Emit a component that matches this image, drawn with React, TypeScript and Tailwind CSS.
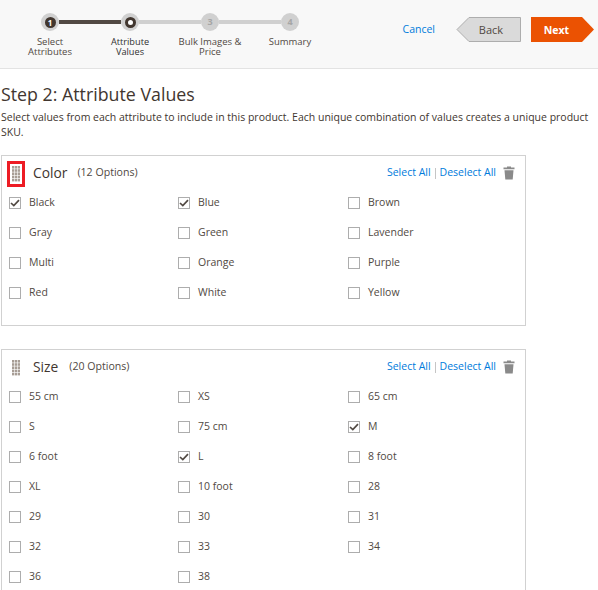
import * as React from 'react'

type Option = { label: string; checked?: boolean }

const colorOptions: Option[] = [
  { label: 'Black', checked: true },
  { label: 'Blue', checked: true },
  { label: 'Brown' },
  { label: 'Gray' },
  { label: 'Green' },
  { label: 'Lavender' },
  { label: 'Multi' },
  { label: 'Orange' },
  { label: 'Purple' },
  { label: 'Red' },
  { label: 'White' },
  { label: 'Yellow' },
]

const sizeOptions: Option[] = [
  { label: '55 cm' },
  { label: 'XS' },
  { label: '65 cm' },
  { label: 'S' },
  { label: '75 cm' },
  { label: 'M', checked: true },
  { label: '6 foot' },
  { label: 'L', checked: true },
  { label: '8 foot' },
  { label: 'XL' },
  { label: '10 foot' },
  { label: '28' },
  { label: '29' },
  { label: '30' },
  { label: '31' },
  { label: '32' },
  { label: '33' },
  { label: '34' },
  { label: '36' },
  { label: '38' },
]

const Grip = () => (
  <svg width="8" height="16" viewBox="0 0 8 16" className="block">
    {[0, 3, 6].map((x) =>
      [0, 3.2, 6.4, 9.6, 12.8].map((y) => (
        <rect key={`${x}-${y}`} x={x} y={y} width="2.4" height="2.6" fill="#a79d95" />
      )),
    )}
  </svg>
)

const TrashIcon = () => (
  <svg width="12" height="14" viewBox="0 0 12 14" className="ml-[7px] block">
    <path d="M4 1.5 V.5 H8 V1.5 H11.5 V3.2 H.5 V1.5 Z" fill="#8a8a8a" />
    <path d="M1.5 4.2 H10.5 L9.7 13.5 H2.3 Z" fill="#8a8a8a" />
  </svg>
)

const Checkbox = ({ checked }: { checked?: boolean }) => (
  <span className="w-[10px] h-[10px] box-content border border-[#adadad] bg-white flex items-center justify-center shrink-0">
    {checked && (
      <svg width="10" height="8" viewBox="0 0 10 8">
        <path d="M1 4 L3.8 6.6 L9 1.2" fill="none" stroke="#514943" strokeWidth="1.7" />
      </svg>
    )}
  </span>
)

const AttributeCard = ({
  name,
  count,
  options,
  highlight,
  className,
}: {
  name: string
  count: number
  options: Option[]
  highlight?: boolean
  className?: string
}) => (
  <div className={`ml-px w-[525px] border border-[#d1d1d1] ${className ?? ''}`}>
    <div className="h-[34px] -mb-[2px] flex items-center">
      <div
        className={`w-[18px] h-[26px] ml-[5px] mt-px flex items-center justify-center ${
          highlight ? 'border-[3px] border-[#ed1c24]' : ''
        }`}
      >
        <Grip />
      </div>
      <span className="ml-[8px] text-[13.8px] text-[#41362f]">{name}</span>
      <span className={`text-[10.6px] text-[#514943] ${highlight ? 'ml-[10px]' : 'ml-[11px]'}`}>({count} Options)</span>
      <div className="ml-auto mr-[10px] flex items-center text-[10.5px] text-[#007bdb]">
        <span>Select All</span>
        <span className="mx-[4px] h-[11px] border-l border-[#c5c5c5]" />
        <span>Deselect All</span>
        <TrashIcon />
      </div>
    </div>
    <div className="grid grid-cols-[169px_170px_1fr] pl-[7px] auto-rows-[30px] pb-[17px]">
      {options.map((option) => (
        <div key={option.label} className="flex items-center gap-2">
          <Checkbox checked={option.checked} />
          <span className="text-[10.5px] text-[#514943]">{option.label}</span>
        </div>
      ))}
    </div>
  </div>
)

const steps = [
  { n: '1', label: 'Select Attributes' },
  { n: '', label: 'Attribute Values' },
  { n: '3', label: 'Bulk Images & Price' },
  { n: '4', label: 'Summary' },
]

const Stepper = () => (
  <div className="ml-[10px] w-80 mt-[13px]">
    <div className="flex items-center pl-[31px]">
      <span className="w-[18px] h-[18px] rounded-full bg-[#d0d0d0] flex items-center justify-center shrink-0 z-10">
        <span className="w-[11px] h-[11px] rounded-full bg-[#41362f] text-white text-[8px] font-bold leading-[11px] text-center">
          1
        </span>
      </span>
      <span className="w-[62px] h-1 bg-[#514943] shrink-0" />
      <span className="w-[18px] h-[18px] rounded-full bg-[#d0d0d0] flex items-center justify-center shrink-0 z-10">
        <span className="w-[11px] h-[11px] rounded-full bg-white border-[3px] border-[#41362f]" />
      </span>
      <span className="w-[62px] h-1 bg-[#d0d0d0] shrink-0" />
      <span className="w-[18px] h-[18px] rounded-full bg-[#d0d0d0] text-[#a6a6a6] text-[9px] font-bold flex items-center justify-center shrink-0">
        3
      </span>
      <span className="w-[62px] h-1 bg-[#d0d0d0] shrink-0" />
      <span className="w-[18px] h-[18px] rounded-full bg-[#d0d0d0] text-[#a6a6a6] text-[9px] font-bold flex items-center justify-center shrink-0">
        4
      </span>
    </div>
    <div className="grid grid-cols-4 mt-[6px]">
      {steps.map((step, i) => (
        <div
          key={step.label}
          className={`px-[6px] text-center leading-[10px] ${
            i === 1 ? 'text-[9.2px] text-[#303030] font-medium' : 'text-[9.5px] text-[#514943]'
          }`}
        >
          {step.label}
        </div>
      ))}
    </div>
  </div>
)

export default function App() {
  return (
    <div className="w-[598px] h-[590px] overflow-hidden bg-white font-['Open_Sans',sans-serif]">
      <div className="h-[69px] bg-[#f8f8f8] border-b border-[#e3e3e3] flex items-start">
        <Stepper />
        <div className="ml-auto flex items-center mt-[17px] mr-[4px]">
          <span className="text-[10.5px] font-medium text-[#007bdb]">Cancel</span>
          <svg width="65" height="25" viewBox="0 0 65 25" className="ml-[21px]">
            <path d="M13 .5 H64.5 V24.5 H13 L1 12.5 Z" fill="#dadada" stroke="#adadad" />
            <text x="35" y="17" textAnchor="middle" fontSize="11" fill="#514943" fontFamily="Open Sans">
              Back
            </text>
          </svg>
          <svg width="63" height="25" viewBox="0 0 63 25" className="ml-[10px]">
            <path d="M0 0 H51 L63 12.5 L51 25 H0 Z" fill="#eb5202" />
            <text x="25.500" y="17" textAnchor="middle" fontSize="10.5" fontWeight="700" fill="#fff" fontFamily="Open Sans">
              Next
            </text>
          </svg>
        </div>
      </div>

      <h1 className="mt-[12px] ml-px text-[17.8px] leading-[26px] text-[#41362f]">Step 2: Attribute Values</h1>
      <p className="mt-[3px] ml-px text-[10.5px] leading-[15px] text-[#41362f]">
        Select values from each attribute to include in this product. Each unique combination of values creates a unique product SKU.
      </p>

      <AttributeCard name="Color" count={12} options={colorOptions} highlight className="mt-[15px]" />
      <AttributeCard name="Size" count={20} options={sizeOptions} className="mt-[23px]" />
    </div>
  )
}
